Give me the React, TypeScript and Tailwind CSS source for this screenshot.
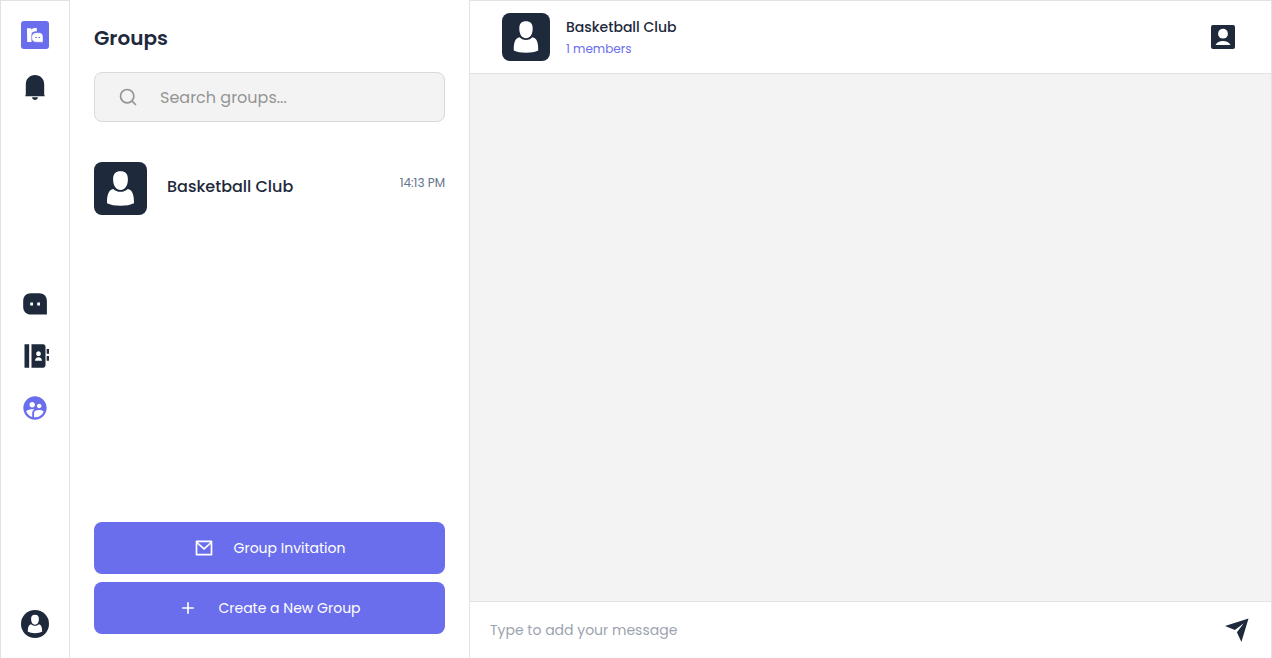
import React from "react";
import { RiAddLine, RiContactsBookFill, RiMailLine } from "react-icons/ri";
import { MdSupervisedUserCircle } from "react-icons/md";
import { Search } from "lucide-react";

function Avatar({ className }: { className: string }) {
  return (
    <svg viewBox="0 0 53 53" className={className} aria-hidden="true">
      <rect width="53" height="53" fill="#1e293b" />
      <path
        fill="#fff"
        d="M26.500 9.200c4.900 0 7.400 2.500 7.400 8c0 6.600-3 10.800-7.400 10.800s-7.400-4.200-7.400-10.800C19.100 11.700 21.600 9.200 26.500 9.200Z"
      />
      <path
        fill="#fff"
        d="M19.300 26.900c1.700 1.900 4.200 2.800 7.200 2.800s5.500-.9 7.200-2.800c4.500.6 6.500 5.600 6.300 14.400c-3.500 1.700-8 2.500-13.500 2.500s-10-.8-13.500-2.500c-.2-8.800 1.800-13.800 6.300-14.400Z"
      />
    </svg>
  );
}

function Logo() {
  return (
    <svg viewBox="0 0 28 28" className="size-7" aria-hidden="true">
      <rect width="28" height="28" rx="3" fill="#6a6eec" />
      <path
        fill="#fff"
        d="M6 7.200h4v1.400C11.200 7.200 13 6.800 15.800 7v3.400c-2.900-.2-4.800.7-5.300 2.700V21H6.200Z"
      />
      <path
        fill="#fff"
        stroke="#6a6eec"
        strokeWidth="0.4"
        d="M15.400 11.700h2.500c2.700 0 4.100 1.600 4.100 4.200V21.200h-6.600c-3 0-4.700-1.900-4.700-4.800s1.700-4.700 4.700-4.700Z"
      />
      <path fill="#6a6eec" d="M14.200 16.100h1.700v1h-1.700zM17.400 16.100h1.700v1h-1.700z" />
    </svg>
  );
}

function BellIcon() {
  return (
    <svg viewBox="0 0 28 28" className="size-7" fill="#1e293b" aria-hidden="true">
      <path d="M14 2.100c5.300 0 9.200 4 9.200 9.300v10.800l.6.300v.8H4.200v-.8l.6-.3V11.400c0-5.300 3.900-9.300 9.200-9.300ZM11 24.300h6c-.4 1.700-1.500 2.700-3 2.700s-2.600-1-3-2.700Z" />
    </svg>
  );
}

function ChatIcon() {
  return (
    <svg viewBox="0 0 28 28" className="size-7" aria-hidden="true">
      <path
        fill="#1e293b"
        d="M10 3.200h8c4.900 0 7.900 3 7.900 7.900v13.500H10c-4.800 0-7.800-3-7.800-7.800v-5.700c0-4.900 3-7.900 7.800-7.900Z"
      />
      <path fill="#fff" d="M9.200 12.600H12v2.800H9.200zM16.200 12.600H19v2.800h-2.800z" />
    </svg>
  );
}

function AccountBoxIcon() {
  return (
    <svg viewBox="0 0 24 24" className="size-6" aria-hidden="true">
      <rect width="24" height="24" rx="2" fill="#1e293b" />
      <circle cx="12" cy="8.700" r="4.900" fill="#fff" />
      <path fill="#fff" d="M4.500 20c1.300-2.500 4-4 7.500-4s6.200 1.500 7.500 4Z" />
    </svg>
  );
}

function SendIcon() {
  return (
    <svg viewBox="0 0 24 24" className="size-6" fill="#1e293b" aria-hidden="true">
      <path d="M23.500.4 16.400 24l-4.500-9.800 6.900-8.900L9.900 12 0 8.100Z" />
    </svg>
  );
}

export default function App() {
  return (
    <div className="flex h-screen bg-white font-['Poppins','Inter',sans-serif] text-[#1e293b]">
      <nav
        aria-label="Main"
        className="flex w-[70px] shrink-0 flex-col items-center justify-between border-x border-t border-[#e2e2e4] pt-5 pb-5"
      >
        <div className="flex flex-col gap-6">
          <a href="#home" aria-label="Home"><Logo /></a>
          <button type="button" aria-label="Notifications"><BellIcon /></button>
        </div>
        <div className="flex flex-col gap-6">
          <a href="#chats" aria-label="Chats"><ChatIcon /></a>
          <a href="#contacts" aria-label="Contacts"><RiContactsBookFill className="size-7" /></a>
          <a href="#groups" aria-label="Groups" aria-current="page">
            <MdSupervisedUserCircle className="size-7 text-[#6a6eec]" />
          </a>
        </div>
        <button type="button" aria-label="Profile" className="overflow-hidden rounded-full">
          <Avatar className="size-7" />
        </button>
      </nav>

      <aside className="flex w-[400px] shrink-0 flex-col border-r border-[#e2e2e4] px-6 pt-6 pb-6">
        <h1 className="text-xl leading-7 font-semibold">Groups</h1>
        <label className="mt-5 flex h-[50px] items-center gap-5 rounded-lg border border-[#d9d9d9] bg-[#f3f3f3] px-[23px]">
          <Search className="size-5 shrink-0 text-[#959595]" strokeWidth={2} />
          <input
            type="search"
            aria-label="Search groups"
            placeholder="Search groups..."
            className="h-full min-w-0 flex-1 bg-transparent pl-0.5 text-base outline-none placeholder:text-[#959595]"
          />
        </label>
        <ul className="mt-10 flex-1">
          <li>
            <button type="button" className="flex w-full items-center text-left">
              <Avatar className="size-[53px] rounded-lg" />
              <span className="ml-5 flex flex-1 items-center justify-between pb-1">
                <span className="text-base leading-6 font-medium">Basketball Club</span>
                <time className="pb-2 text-xs leading-4 text-[#64748b]">14:13 PM</time>
              </span>
            </button>
          </li>
        </ul>
        <div className="flex flex-col gap-2">
          <button type="button" className="flex h-[52px] items-center justify-center gap-5 rounded-lg bg-[#6a6eec] text-sm text-white">
            <RiMailLine className="size-5" />
            Group Invitation
          </button>
          <button type="button" className="flex h-[52px] items-center justify-center gap-5 rounded-lg bg-[#6a6eec] text-sm text-white">
            <RiAddLine className="size-5" />
            Create a New Group
          </button>
        </div>
      </aside>

      <main className="flex min-w-0 flex-1 flex-col border-t border-r border-[#e2e2e4]">
        <header className="flex h-[73px] shrink-0 items-center border-b border-[#e2e2e4] pr-9 pl-8">
          <Avatar className="size-12 rounded-lg" />
          <div className="ml-4 flex flex-1 flex-col gap-0.5 pt-0.5">
            <h2 className="text-sm leading-5 font-medium">Basketball Club</h2>
            <p className="text-xs leading-5 text-[#6a6eec]">1 members</p>
          </div>
          <button type="button" aria-label="Group details"><AccountBoxIcon /></button>
        </header>
        <section aria-label="Messages" className="flex-1 bg-[#f3f3f3]" />
        <form className="flex h-[57px] shrink-0 items-center border-t border-[#e2e2e4] pr-[22px] pl-5">
          <input
            type="text"
            aria-label="Message"
            placeholder="Type to add your message"
            className="min-w-0 flex-1 bg-transparent text-sm outline-none placeholder:text-[#9ca3af]"
          />
          <button type="button" aria-label="Send"><SendIcon /></button>
        </form>
      </main>
    </div>
  );
}
